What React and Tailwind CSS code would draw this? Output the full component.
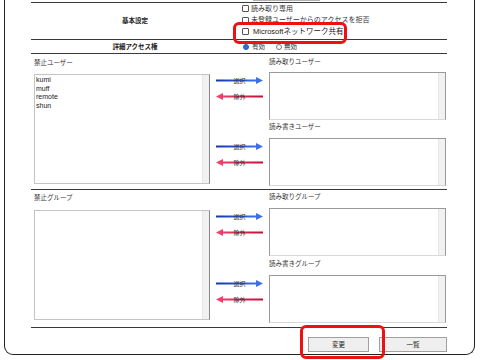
import React from 'react'

function Checkbox() {
  return <span className="inline-block w-[7px] h-[7px] border border-[#555] bg-white rounded-[1px] shrink-0" />
}

function Arrow({ dir, label }) {
  const right = dir === 'right'
  return (
    <div className="relative w-[47px] h-[7px]">
      <svg width="47" height="7" viewBox="0 0 47 7" className="block">
        <defs>
          <linearGradient id="gBlue" x1="0" y1="0" x2="1" y2="0">
            <stop offset="0" stopColor="#1437b0" />
            <stop offset="1" stopColor="#3a6ff2" />
          </linearGradient>
          <linearGradient id="gRed" x1="0" y1="0" x2="1" y2="0">
            <stop offset="0" stopColor="#ee3a66" />
            <stop offset="1" stopColor="#c0103a" />
          </linearGradient>
        </defs>
        {right ? (
          <>
            <rect x="0" y="2.5" width="41" height="2" fill="url(#gBlue)" />
            <polygon points="40,0 47,3.5 40,7" fill="#3a6ff2" />
          </>
        ) : (
          <>
            <polygon points="0,3.5 7,0 7,7" fill="#f2406a" />
            <rect x="6" y="2.5" width="41" height="2" fill="url(#gRed)" />
          </>
        )}
      </svg>
      <span className="absolute inset-0 flex items-center justify-center text-[6px] leading-none text-[#333]">
        {label}
      </span>
    </div>
  )
}

function ArrowPair() {
  return (
    <div className="flex flex-col gap-[9px] pt-[5px] w-[47px]">
      <Arrow dir="right" label="選択" />
      <Arrow dir="left" label="除外" />
    </div>
  )
}

function ListBox({ h, items = [], dark }) {
  return (
    <div
      className={
        'flex bg-white border ' +
        (dark ? 'border-[#9a9a9a] border-b-[#d8d8d8]' : 'border-[#c4c4c4] border-r-[#888]')
      }
      style={{ height: h }}
    >
      <div className="flex-1 pl-[1px] pt-[1px] text-[7px] leading-[8.5px] text-[#222]">
        {items.map((it) => (
          <div key={it}>{it}</div>
        ))}
      </div>
      <div className="w-[7px] bg-[#f1f1f1] border-l border-[#e6e6e6]" />
    </div>
  )
}

function RightGroup({ label, labelPt, gapAfterLabel }) {
  return (
    <div>
      <div className="pl-[59px] text-[6.5px] leading-[10px] text-[#333]" style={{ paddingTop: labelPt }}>
        {label}
      </div>
      <div className="flex items-start" style={{ marginTop: gapAfterLabel }}>
        <div className="ml-[6px] mr-[6px]">
          <ArrowPair />
        </div>
        <div className="w-[177px]">
          <ListBox h={48} dark />
        </div>
      </div>
    </div>
  )
}

function AccessSection({ leftLabel, items, top, bottom, leftPt, leftGap }) {
  return (
    <div className="flex items-start border-t border-[#3a3a3a] pl-[3px]">
      <div className="w-[176px]">
        <div className="text-[6.5px] leading-[10px] text-[#333]" style={{ paddingTop: leftPt }}>
          {leftLabel}
        </div>
        <div style={{ marginTop: leftGap }}>
          <ListBox h={110} items={items} />
        </div>
      </div>
      <div>
        <RightGroup label={top.label} labelPt={top.pt} gapAfterLabel={top.gap} />
        <RightGroup label={bottom.label} labelPt={bottom.pt} gapAfterLabel={bottom.gap} />
      </div>
    </div>
  )
}

export default function App() {
  return (
    <div className="relative w-[480px] h-[360px] overflow-hidden bg-white antialiased font-['Liberation_Sans','Noto_Sans_CJK_JP',sans-serif]">
      {/* frame */}
      <div className="ml-[4px] w-[471px] h-[355px] border-x border-b border-[#222] rounded-b-[9px] pl-[26px]">
        <div className="w-[416px]">
          <div className="h-[2px] relative">
            <div className="ml-[222px] w-[67px] h-[1px] bg-[#b0b0b0]" />
          </div>

          {/* 基本設定 */}
          <div className="flex border-t border-[#3a3a3a] h-[37px]">
            <div className="w-[208px] flex items-center justify-center text-[6.5px] font-bold text-[#222]">
              基本設定
            </div>
            <div className="pl-[3px] text-[7px] text-[#333]">
              <div className="h-[11.5px] flex items-center gap-[2px]">
                <Checkbox />
                <span>読み取り専用</span>
              </div>
              <div className="h-[11.5px] flex items-center gap-[2px]">
                <Checkbox />
                <span>未登録ユーザーからのアクセスを拒否</span>
              </div>
              <div className="h-[11.5px] flex items-center gap-[4px]">
                <Checkbox />
                <span className="text-[7.5px] text-[#222]">Microsoftネットワーク共有</span>
              </div>
            </div>
          </div>

          {/* 詳細アクセス権 */}
          <div className="flex border-t border-[#3a3a3a] h-[14px]">
            <div className="w-[208px] flex items-center justify-center text-[6.5px] font-bold text-[#222]">
              詳細アクセス権
            </div>
            <div className="pl-[4px] flex items-center text-[6.5px] text-[#333]">
              <span className="w-[6px] h-[6px] rounded-full bg-[#2f6fe0] border border-[#2456b8]" />
              <span className="ml-[3px]">有効</span>
              <span className="ml-[11px] w-[6px] h-[6px] rounded-full bg-white border border-[#777]" />
              <span className="ml-[2px]">無効</span>
            </div>
          </div>

          <AccessSection
            leftLabel="禁止ユーザー"
            items={['kumi', 'muff', 'remote', 'shun']}
            leftPt={4}
            leftGap={6}
            top={{ label: '読み取りユーザー', pt: 3, gap: 5 }}
            bottom={{ label: '読み書きユーザー', pt: 2, gap: 6 }}
          />
          <div className="h-[3px]" />

          <AccessSection
            leftLabel="禁止グループ"
            items={[]}
            leftPt={3}
            leftGap={7}
            top={{ label: '読み取りグループ', pt: 2, gap: 6 }}
            bottom={{ label: '読み書きグループ', pt: 3, gap: 6 }}
          />
          <div className="h-[4px]" />

          <div className="border-t border-[#3a3a3a] pt-[9px] flex">
            <button className="ml-[277px] w-[69px] h-[15px] bg-[#efefef] border border-[#a0a0a0] text-[6.5px] text-[#222] flex items-center justify-center">
              変更
            </button>
            <button className="ml-[10px] w-[68px] h-[15px] shrink-0 bg-[#efefef] border border-[#a0a0a0] text-[6.5px] text-[#222] flex items-center justify-center">
              一覧
            </button>
          </div>
        </div>
      </div>

      {/* highlight boxes */}
      <div className="absolute left-[233px] top-[22px] w-[114px] h-[22px] border-[3px] border-[#ee1111] rounded-[6px]" />
      <div className="absolute left-[300px] top-[325px] w-[85px] h-[34px] border-[3px] border-[#ee1111] rounded-[6px]" />
    </div>
  )
}
